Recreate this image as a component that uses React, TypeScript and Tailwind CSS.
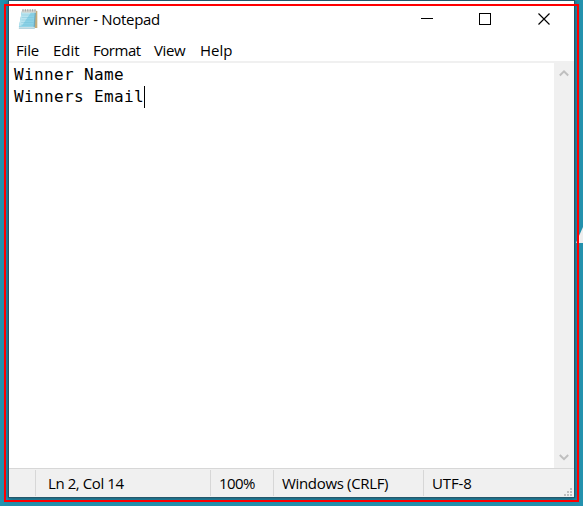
import React from 'react';

const menus = [
  { label: 'File', cls: 'w-[37px] tracking-[-0.2px]' },
  { label: 'Edit', cls: 'w-[40px] tracking-[-0.05px]' },
  { label: 'Format', cls: 'w-[61px] tracking-[-0.45px]' },
  { label: 'View', cls: 'w-[46px] tracking-[-0.35px]' },
  { label: 'Help', cls: 'w-[40px] tracking-normal' },
];

const cells = [
  { label: '', cls: 'w-[27px]' },
  { label: 'Ln 2, Col 14', cls: 'w-[175px] pl-3 tracking-[-0.42px]' },
  { label: '100%', cls: 'w-[63px] pl-2 tracking-[-0.6px]' },
  { label: 'Windows (CRLF)', cls: 'w-[150px] pl-2 tracking-[-0.33px]' },
];

function NotepadIcon() {
  return (
    <svg width="20" height="22" viewBox="0 0 20 22">
      <path d="M16.8 2.5 19.3 3v17H16z" fill="#c5ac79" />
      <path d="M4 3h14l-1.2 17.5H.8z" fill="#6faabd" />
      <path d="M4 3h12.8L15.5 19H.8z" fill="#8bd1e6" />
      <path d="M4 3h10L4 17.5l-3 .5z" fill="#c4e9f1" opacity=".8" />
      <path d="M4 1.8h14v3H3.7z" fill="#d5d8d3" />
      <path d="M5 1v2.5M7.4 1v2.5M9.8 1v2.5M12.2 1v2.5M14.6 1v2.5M17 1v2.5" stroke="#898b8c" strokeWidth=".7" />
      <path d="M4 7h12M3.7 9.5h12M3.5 12h12M3.2 14.5h12M3 17h12" stroke="#67bad3" strokeWidth=".35" />
      <path d="M1 19.4h15.7" stroke="#eef5f6" strokeWidth=".8" />
    </svg>
  );
}

export default function App() {
  return (
    <div className="relative h-[506px] w-[583px] overflow-hidden bg-[#2492ae] pl-2 font-['Open_Sans','Noto_Sans',sans-serif] text-[15px] text-black">
      <svg className="absolute left-[576px] top-[224px]" width="7" height="20">
        <path d="M0 19 2.5 13 7 3v16z" fill="#eee" />
      </svg>
      <div className="flex h-[498px] w-[567px] flex-col border border-[#24576a] bg-white shadow-[0_1px_5px_#17526a]">
        <header className="flex h-[38px] shrink-0 items-center justify-between">
          <div className="flex items-center pb-[2px]">
            <div className="ml-[9px]"><NotepadIcon /></div>
            <span className="ml-[5px] whitespace-nowrap tracking-[-0.3px]">winner - Notepad</span>
          </div>
          <svg width="153" height="38" fill="none" stroke="black" shapeRendering="crispEdges">
            <path d="M0 17.5h12" />
            <path d="M58.5 12.5h11v11h-11z" />
            <path d="m117.5 12.5 11 11m0-11-11 11" shapeRendering="auto" strokeWidth="1.15" />
          </svg>
        </header>
        <nav className="flex h-[24px] shrink-0 items-center border-b-2 border-[#f0f0f0] pl-[7px]">
          {menus.map((m) => <span key={m.label} className={`whitespace-nowrap ${m.cls}`}>{m.label}</span>)}
        </nav>
        <main className="flex min-h-0 flex-1">
          <div className="flex-1 pl-[5px] pt-px font-['DejaVu_Sans_Mono',monospace] text-[16px] leading-[22px] tracking-[0.37px]">
            <div>Winner Name</div>
            <div className="flex items-center">Winners Email<span className="h-[22px] w-px bg-black" /></div>
          </div>
          <div className="flex w-5 flex-col items-center justify-between bg-[#f0f0f0] py-[6px]">
            <svg width="10" height="9" fill="none" stroke="#bfbfbf" strokeWidth="2"><path d="m.8 6.5 4.2-4.2 4.2 4.2" /></svg>
            <svg width="10" height="9" fill="none" stroke="#bfbfbf" strokeWidth="2"><path d="m.8 2 4.2 4.2L9.2 2" /></svg>
          </div>
        </main>
        <footer className="flex h-[29px] shrink-0 border-t border-[#d7d7d7] bg-[#f0f0f0] py-px">
          {cells.map((c) => (
            <div key={c.label} className={`flex items-center whitespace-nowrap border-r border-[#d7d7d7] ${c.cls}`}>{c.label}</div>
          ))}
          <div className="flex flex-1 items-center justify-between pl-2 tracking-[-0.15px]">
            UTF-8
            <svg className="mr-[2px] self-end" width="8" height="8" fill="#bfbfbf">
              <path d="M6 0h2v2H6zM3 3h2v2H3zM6 3h2v2H6zM0 6h2v2H0zM3 6h2v2H3zM6 6h2v2H6z" />
            </svg>
          </div>
        </footer>
      </div>
      <div className="pointer-events-none absolute left-1 top-1 h-[498px] w-[575px] border-2 border-[#ff0000]" />
    </div>
  );
}
